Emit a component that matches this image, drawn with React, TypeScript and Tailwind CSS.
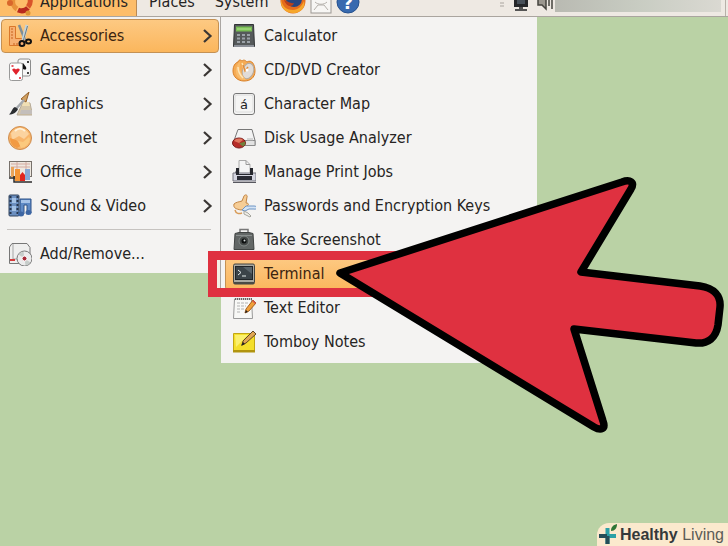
import type { ReactNode } from "react"

const Icon = ({ children }: { children: ReactNode }) => (
  <svg className="w-6 h-6 shrink-0" viewBox="0 0 24 24" fill="none" aria-hidden="true">{children}</svg>
)

const AccessoriesIcon = () => (
  <Icon>
    <path d="M1.500 2.500h6v12h9v7h-15z" fill="#f6b072" stroke="#d9772b" />
    <path d="M3 5h2M3 8h2M3 11h2M3 14h2M6 19v2M9 19v2" stroke="#c8621c" />
    <path d="M11 1l6 15" stroke="#7e8e98" strokeWidth="2.500" />
    <path d="M19 1l-4 15" stroke="#c2d3dc" strokeWidth="3" />
    <path d="M19.500 2l-4 14" stroke="#6d7b80" />
    <ellipse cx="14" cy="19.500" rx="2.500" ry="2.500" stroke="#111" strokeWidth="2" />
    <ellipse cx="20.500" cy="17.500" rx="2.500" ry="2" stroke="#111" strokeWidth="2" />
  </Icon>
)

const GamesIcon = () => (
  <Icon>
    <rect x="10" y="1" width="12.500" height="17" rx="2" fill="#f7f7f7" stroke="#8c8c8c" />
    <path d="M15 5l3 4c1 3-1 3-3 2-3 2-5-1-3-3z" fill="#111" />
    <path d="M19 4h2M19 15h2" stroke="#444" strokeWidth="2" />
    <rect x="1.500" y="5" width="13" height="17.500" rx="2" fill="#fff" stroke="#999" />
    <path d="M8 17l-3.500-4.500c-1-2 2-3 3.500-1 1.500-2 4.500-1 3.500 1z" fill="#e0222c" />
    <path d="M3.500 8h2M11 20h2" stroke="#e0222c" strokeWidth="1.500" />
  </Icon>
)

const GraphicsIcon = () => (
  <Icon>
    <path d="M15 10l7 1 2.500 12H9z" fill="#d5c7ab" stroke="#b7ab97" />
    <path d="M15 10h6l1 4h-8z" fill="#f0dfb4" />
    <path d="M13 18h11v4H12z" fill="#c3bebb" />
    <path d="M21 0l-3 10-5-3z" fill="#d2a161" stroke="#93602a" />
    <path d="M16 8L7 18" stroke="#a5a9ad" strokeWidth="2.500" />
    <path d="M7 15l3 2c-2 4-5 5.500-9 5.500C4 20 4 16 7 15z" fill="#2a2d30" />
  </Icon>
)

const InternetIcon = () => (
  <Icon>
    <circle cx="12" cy="12" r="11.500" fill="#f8b56b" stroke="#cd8d50" />
    <path d="M3 7c5-6 14-6 18 1l-5 5-5-3-7 4z" fill="#fbd3a0" />
    <path d="M2 12l6 2 6 5-5 3C5 21 2 17 2 12z" fill="#f29a43" />
    <path d="M10 15l5 1 6-5 1 2c-1 5-4 8-9 9z" fill="#fbc97e" />
    <path d="M7 5c3-3 7-3 10 0" stroke="#fff1d9" strokeWidth="2" />
  </Icon>
)

const OfficeIcon = () => (
  <Icon>
    <rect x="1.500" y="1.500" width="22" height="15" fill="#eee8e0" stroke="#77716b" />
    <path d="M3 4h19M3 7h19M9 2v13M18 2v13" stroke="#d4aaa0" />
    <path d="M3 7h3v10H3z" fill="#e9a45a" />
    <path d="M7 9h5v12H7z" fill="#f59535" />
    <path d="M12 15l2.500-3 2.500 3v6h-5z" fill="#e0261f" />
    <path d="M17 9h5v11h-5z" fill="#86a8d6" />
    <path d="M6 16v6h18M1 18h6" stroke="#2c2c2c" strokeWidth="1.500" />
  </Icon>
)

const SoundIcon = () => (
  <Icon>
    <rect x="1" y="1" width="10" height="21" rx="1" fill="#6b8fc0" stroke="#33445f" />
    <path d="M2.500 2v20M9.500 2v20" stroke="#26354b" strokeWidth="2" strokeDasharray="2 2" />
    <path d="M4 4h4v5H4zM4 12h4v5H4z" fill="#a3c1e4" />
    <path d="M12 5h11v14h-4v-8h-3v9h-4z" fill="#5f8ac6" stroke="#2e5288" />
    <path d="M13 6h9v3h-9z" fill="#a5c2e8" />
    <ellipse cx="13" cy="20" rx="3" ry="2.500" fill="#3d66a3" />
    <ellipse cx="20.500" cy="18.500" rx="3" ry="2.500" fill="#3d66a3" />
  </Icon>
)

const AddRemoveIcon = () => (
  <Icon>
    <path d="M4 1.500h15l3 4v16H1.500V5z" fill="#efefee" stroke="#777" />
    <path d="M5 2v15M5 17h10" stroke="#a5a5a5" />
    <path d="M2 18h5" stroke="#d53b3b" strokeWidth="2" />
    <circle cx="16.500" cy="16.500" r="7.500" fill="#ececec" stroke="#777" />
    <path d="M16.500 16.500l-6-4a7 7 0 0 1 5-3zM16.500 16.500l6 4a7 7 0 0 1-5 3z" fill="#c7cdca" />
    <circle cx="16.500" cy="16.500" r="2.500" fill="#a72c38" stroke="#fff" />
  </Icon>
)

const CalculatorIcon = () => (
  <Icon>
    <path d="M2.500 .500h19l1 22h-21z" fill="#55595a" stroke="#303334" />
    <path d="M4 2.500h16v5H4z" fill="#79bf54" />
    <path d="M5 5h14" stroke="#b5e391" />
    <path d="M5 11h14M5 14.500h14M5 18h14" stroke="#9ba2a8" strokeWidth="2" strokeDasharray="3 2" />
    <path d="M2 22h20" stroke="#8c9098" strokeWidth="2" />
  </Icon>
)

const DiscIcon = () => (
  <Icon>
    <path d="M6 4c1-3 3-2 4-1 2-2 4 0 5 1 5-3 8 3 8 9 0 7-5 10-11 10S1 19 1 13C1 8 3 5 6 4z" fill="#f5ab55" stroke="#d98027" />
    <ellipse cx="16" cy="13" rx="5.500" ry="8" transform="rotate(20 16 13)" fill="#e1dcd8" stroke="#b3aaa0" />
    <path d="M8 4c-1 7 1 12 6 18-7 1-11-5-10-11 1-4 2-6 4-7z" fill="#f9bc6c" />
    <path d="M10 5c1 2 2 6 3 9M6 9c0 5 2 8 5 11" stroke="#ffe5b5" strokeWidth="1.500" />
    <path d="M11 7l2 6 3-4" stroke="#e08b3a" strokeWidth="1.500" />
    <circle cx="15" cy="12" r="1.500" fill="#fff" />
  </Icon>
)

const CharacterIcon = () => (
  <Icon>
    <rect x="1.500" y="1.500" width="21" height="21" rx="2.500" fill="#f5f5f4" stroke="#777" />
    <rect x="3" y="3" width="18" height="17" rx="2" stroke="#dcdcdc" />
    <text x="12" y="17" textAnchor="middle" fontFamily="DejaVu Sans" fontSize="13" fill="#222">á</text>
  </Icon>
)

const DiskIcon = () => (
  <Icon>
    <path d="M6 3.500h14l3 11v5H2v-5z" fill="#f3f3f3" stroke="#777" />
    <path d="M3 14.500h20v5H3z" fill="#e2e2e2" stroke="#8b8b8b" />
    <path d="M16 12v3M18 12v3M20 12v3" stroke="#b5b5b5" />
    <ellipse cx="7" cy="17" rx="6.500" ry="5" fill="#b72d29" stroke="#7a1b19" />
    <path d="M7 17l-5-2c2-3 7-3 9-1z" fill="#e0785f" />
    <path d="M7 17.500l6-2c1 2 0 4-2 5z" fill="#71803b" />
  </Icon>
)

const PrinterIcon = () => (
  <Icon>
    <path d="M3 13l2-5h14l2 5z" fill="#48494f" />
    <path d="M7 .500h7l4 4V14H7z" fill="#f5f5f5" stroke="#aaa" />
    <path d="M14 .500v4h4" stroke="#999" />
    <path d="M1 13h23v8H1z" fill="#d4d5df" stroke="#74747f" />
    <path d="M4 8h3v6h11V8h3v7H4z" fill="#26272d" />
    <path d="M5 16h15v4H5z" fill="#2b2c34" />
    <path d="M1 22.500h23" stroke="#57575f" />
  </Icon>
)

const KeysIcon = () => (
  <Icon>
    <path d="M2 10c2-2 5-2 8-3l2-5c1-2 4-1 3 1l-1 6c3 0 3 2 1 3 2 1 1 4-2 3l-4 1c-5-1-8-2-7-6z" fill="#f6cd96" stroke="#c38544" />
    <path d="M3 16c1 4 4 4 7 3" stroke="#d89c59" strokeWidth="1.500" />
    <path d="M14 12h8c4 0 3 4 0 3h-5l-4 2-3-1z" fill="#d4e3f4" stroke="#6d94c4" />
    <path d="M12 17l4 2 3 3-1 1-6-3z" fill="#f0eee8" stroke="#a6a69f" />
  </Icon>
)

const CameraIcon = () => (
  <Icon>
    <path d="M8 5V1.500h8V5" stroke="#777" strokeWidth="1.500" />
    <path d="M3 5.500l4-1h10l4 1 1 16H2z" fill="#636766" stroke="#414443" />
    <path d="M4 7.500h16" stroke="#8b908f" />
    <circle cx="12" cy="13" r="5" fill="#454948" stroke="#858b89" />
    <circle cx="12" cy="13" r="2.500" fill="#0d0f0f" />
    <circle cx="12.500" cy="12.500" r="1" fill="#d8dddd" />
  </Icon>
)

const TerminalIcon = () => (
  <Icon>
    <rect x="1.500" y="2" width="21" height="20" rx="1.500" fill="#a9a9a1" stroke="#454540" />
    <rect x="3.500" y="4.500" width="17" height="13" fill="#3b4449" stroke="#202528" />
    <path d="M6 8l3 2.500L6 13M10 14h4" stroke="#e7eeee" />
    <path d="M11 5h9v7z" fill="#59646a" />
    <path d="M2 21h20" stroke="#4a4a45" strokeWidth="2" />
  </Icon>
)

const EditorIcon = () => (
  <Icon>
    <path d="M2.500 3h17l1 19.500h-19z" fill="#f8f8f6" stroke="#999" />
    <path d="M3 3h17" stroke="#666" strokeWidth="2" strokeDasharray="1 1" />
    <path d="M5 7h11M5 10h9M5 13h7M5 16h4" stroke="#b2b2b2" strokeDasharray="3 1" />
    <path d="M21 4l3 3-7 8-4 2 1-4z" fill="#f0a13a" stroke="#a75f1d" />
    <path d="M13 17l1-3 2 2z" fill="#222" />
    <path d="M21 4l3 3-1 1-3-3z" fill="#d8584e" />
  </Icon>
)

const NotesIcon = () => (
  <Icon>
    <path d="M1.500 3.500h21v18h-21z" fill="#f4df2b" stroke="#c2a613" />
    <path d="M1 20h22v2.500H1z" fill="#b1940f" />
    <path d="M3 5h13L4 17z" fill="#fbf06e" />
    <path d="M21 1l3 3-10 9-4 2 1-4z" fill="#e0a653" stroke="#5e4524" />
    <path d="M9 16l2-4 2 2z" fill="#222" />
  </Icon>
)

const categories = [
  { label: "Accessories", icon: <AccessoriesIcon />, active: true },
  { label: "Games", icon: <GamesIcon /> },
  { label: "Graphics", icon: <GraphicsIcon /> },
  { label: "Internet", icon: <InternetIcon /> },
  { label: "Office", icon: <OfficeIcon /> },
  { label: "Sound & Video", icon: <SoundIcon /> },
]

const tools = [
  { label: "Calculator", icon: <CalculatorIcon /> },
  { label: "CD/DVD Creator", icon: <DiscIcon /> },
  { label: "Character Map", icon: <CharacterIcon /> },
  { label: "Disk Usage Analyzer", icon: <DiskIcon /> },
  { label: "Manage Print Jobs", icon: <PrinterIcon /> },
  { label: "Passwords and Encryption Keys", icon: <KeysIcon /> },
  { label: "Take Screenshot", icon: <CameraIcon /> },
  { label: "Terminal", icon: <TerminalIcon />, active: true },
  { label: "Text Editor", icon: <EditorIcon /> },
  { label: "Tomboy Notes", icon: <NotesIcon /> },
]

const Chevron = () => (
  <svg className="w-3 h-4 ml-auto" viewBox="0 0 12 16" fill="none" aria-hidden="true">
    <path d="M2 2l6.500 6L2 14" stroke="#3a3634" strokeWidth="2.200" />
  </svg>
)

type ItemProps = { label: string; icon: ReactNode; active?: boolean; submenu?: boolean }

const MenuItem = ({ label, icon, active, submenu }: ItemProps) => (
  <button
    type="button"
    className={
      active
        ? "flex items-center w-full h-[34px] gap-2 pl-1.5 pr-1 rounded-sm border border-[#c49154] bg-linear-to-b from-[#fdc982] to-[#fbb65c] text-[#3b2410] whitespace-nowrap"
        : "flex items-center w-full h-[34px] gap-2 pl-1.5 pr-1 border border-transparent whitespace-nowrap"
    }
  >
    {icon}
    <span>{label}</span>
    {submenu && <Chevron />}
  </button>
)

const Panel = () => (
  <header className="flex items-end h-[17px] overflow-hidden bg-[#eee9e3] border-b border-[#aaa59f]">
    <button type="button" className="flex items-end gap-1.5 pl-1.5 pr-2 bg-[#fdbd69] border-r border-[#b98a55]">
      <svg className="w-7 h-[30px]" viewBox="0 0 28 30" fill="none" aria-hidden="true">
        <path d="M7 13a9 9 0 0 0 4 10" stroke="#e8913b" strokeWidth="5" />
        <path d="M12 24a9 9 0 0 0 10-2" stroke="#b92a1d" strokeWidth="5" />
        <path d="M22 21a9 9 0 0 0 2-8" stroke="#d9542a" strokeWidth="5" />
        <circle cx="4" cy="17" r="3" fill="#d9662b" />
        <circle cx="22" cy="27" r="2.500" fill="#dd9433" />
      </svg>
      <span className="leading-6 pb-0.5">Applications</span>
    </button>
    <button type="button" className="leading-6 pb-0.5 ml-3">Places</button>
    <button type="button" className="leading-6 pb-0.5 ml-5">System</button>
    <div className="flex items-end gap-1 ml-3 pb-0.5">
      <svg className="w-[26px] h-[26px]" viewBox="0 0 26 26" fill="none" aria-label="Firefox">
        <circle cx="13" cy="13" r="12.500" fill="#e56c1d" />
        <circle cx="14" cy="11" r="8" fill="#26467f" />
        <path d="M1 11c1 8 6 11 12 11 5 0 9-4 11-9 2 7-4 12-11 12S0 20 1 11z" fill="#f6a72b" />
        <path d="M4 12c4 1 6 4 10 3-1 4-7 5-10-3z" fill="#b9401a" />
      </svg>
      <svg className="w-[22px] h-[26px]" viewBox="0 0 22 26" fill="none" aria-label="Mail">
        <rect x="1" y="2" width="20" height="23" fill="#f7f6f4" stroke="#9b9894" />
        <path d="M4 22l4-5h6l4 5M5 14c3 3 9 3 12 0" stroke="#b4b0ab" />
      </svg>
      <svg className="w-6 h-[26px]" viewBox="0 0 24 26" aria-label="Help">
        <circle cx="12" cy="14" r="11" fill="#386aaf" stroke="#26518e" />
        <text x="12" y="21" textAnchor="middle" fontFamily="DejaVu Sans" fontWeight="bold" fontSize="18" fill="#fff">?</text>
      </svg>
    </div>
    <div className="flex items-end ml-auto h-4">
      <svg className="w-[60px] h-4" viewBox="0 0 60 16" fill="none" aria-hidden="true">
        <path d="M5 3h4M5 6h4" stroke="#aaa59f" />
        <path d="M19 0h14v7H19z" fill="#25272a" />
        <path d="M22 0h8v4h-8z" fill="#48515a" />
        <path d="M24 7h4v2h4v2H20V9h4z" fill="#555" />
        <path d="M43 0v5h4l4 4V0" fill="#9b978f" stroke="#46443f" strokeWidth="1.500" />
        <path d="M54 0v6M57 0v9" stroke="#46443f" strokeWidth="1.500" />
      </svg>
      <div className="w-[166px] h-3 mb-1 bg-linear-to-r from-[#b9bab2] via-[#c8ccc2] to-[#dad9d2]" />
      <div className="w-px h-4 ml-1 mr-0.5 bg-[#b7b1a9]" />
    </div>
  </header>
)

const Arrow = () => (
  <svg className="absolute left-[330px] top-[170px] w-[398px] h-[270px] pointer-events-none" viewBox="330 170 398 270" aria-hidden="true">
    <path
      d="M340 273L622 182C630 179 635 182 631 189L581 272L700 286C714 288 721 296 720 307L718 325C716 338 708 344 696 343L574 329L603 421C606 429 601 431 594 427Z"
      fill="#df3140"
      stroke="#000"
      strokeWidth="7.500"
      strokeLinejoin="round"
    />
  </svg>
)

const Brand = () => (
  <footer className="flex items-center self-end h-[23px] gap-0.5 mt-auto pl-0.5 pr-1 rounded-tl-xl bg-[#fbe9cd] font-['Liberation_Sans',sans-serif] text-[#35393a]">
    <svg className="w-[19px] h-[22px]" viewBox="0 0 19 22" fill="none" aria-hidden="true">
      <path d="M8.500 4v16M0 12h17" stroke="#2ba0a6" strokeWidth="4" />
      <path d="M8.500 12v8M0 12h8" stroke="#244d57" strokeWidth="4" />
      <path d="M12 7c0-4 2-6 6-7 0 4-2 7-6 7z" fill="#2f7636" />
    </svg>
    <span><b>Healthy</b> <span className="text-[#5b5c58]">Living</span></span>
  </footer>
)

const App = () => {
  return (
    <div className="relative flex flex-col min-h-screen overflow-hidden bg-[#bad2a5] font-['DejaVu_Sans_Condensed','DejaVu_Sans',sans-serif] text-base text-[#262423]">
      <Panel />
      <main className="flex items-start">
        <nav className="w-[221px] px-px pt-0.5 pb-0.5 bg-[#f4f3f2] border-r border-[#aaa6a2]" aria-label="Applications">
          {categories.map((item) => <MenuItem key={item.label} {...item} submenu />)}
          <hr className="mt-1.5 mb-[7px] ml-1.5 mr-2 border-[#c6c3c0]" />
          <MenuItem label="Add/Remove..." icon={<AddRemoveIcon />} />
        </nav>
        <nav className="relative w-[316px] pl-1 pr-1 pt-0.5 pb-1 bg-[#f4f3f2]" aria-label="Accessories">
          {tools.map((item) => <MenuItem key={item.label} {...item} />)}
          <div className="absolute -left-[13px] top-[234px] w-[200px] h-[46px] border-[9px] border-[#df3140] pointer-events-none">
            <div className="w-1 h-full bg-[#f4efe5] border-r border-[#aaa6a2]" />
          </div>
        </nav>
      </main>
      <Arrow />
      <Brand />
    </div>
  )
}

export default App
